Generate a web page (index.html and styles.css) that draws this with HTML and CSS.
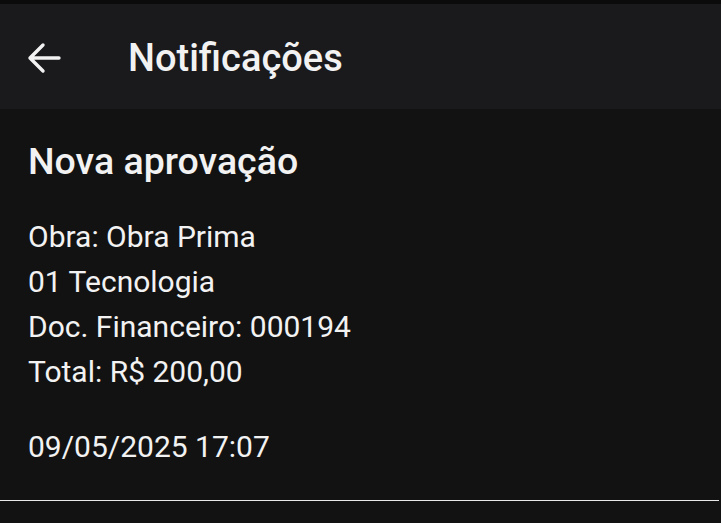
FILE: index.html
```html
<!DOCTYPE html>
<html>
<head>
    <title>Notificações</title>
    <link rel="stylesheet" href="styles.css">
</head>
<body>
    <div class="status-strip"></div>
    <div class="app-bar">
        <svg class="back-icon" viewBox="0 0 36 32" width="36" height="32">
            <path d="M33 16H4M17 3L4 16L17 29" fill="none" stroke="#f2f2f2" stroke-width="3.4" stroke-linecap="round" stroke-linejoin="round"/>
        </svg>
        <h1 class="app-title">Notificações</h1>
    </div>

    <div class="notification">
        <h2 class="notification-title">Nova aprovação</h2>
        <div class="notification-body">
            <div>Obra: Obra Prima</div>
            <div>01 Tecnologia</div>
            <div>Doc. Financeiro: 000194</div>
            <div>Total: R$ 200,00</div>
        </div>
        <div class="notification-date">09/05/2025 17:07</div>
    </div>
    <div class="divider"></div>
</body>
</html>
```

FILE: styles.css
```css
body {
    margin: 0;
    background: #121212;
    color: #f2f2f2;
    font-family: Roboto, 'Noto Sans', sans-serif;
}

.status-strip {
    height: 4px;
    background: #0b0b0b;
}

.app-bar {
    display: flex;
    align-items: center;
    height: 105px;
    padding: 2px 26px 0;
    box-sizing: border-box;
    background: #1a1a1c;
}

.back-icon {
    flex-shrink: 0;
}

.app-title {
    margin: 0 0 0 66px;
    font-size: 38px;
    font-weight: 500;
}

.notification {
    padding: 30px 28px 31px;
}

.notification-title {
    margin: 0 0 31px;
    font-size: 37.5px;
    font-weight: 500;
    line-height: 44px;
}

.notification-body {
    font-size: 30px;
    line-height: 45px;
}

.notification-date {
    margin-top: 30px;
    font-size: 30px;
    line-height: 45px;
}

.divider {
    height: 1px;
    margin-right: 2px;
    background: #e8e8e8;
}
```
